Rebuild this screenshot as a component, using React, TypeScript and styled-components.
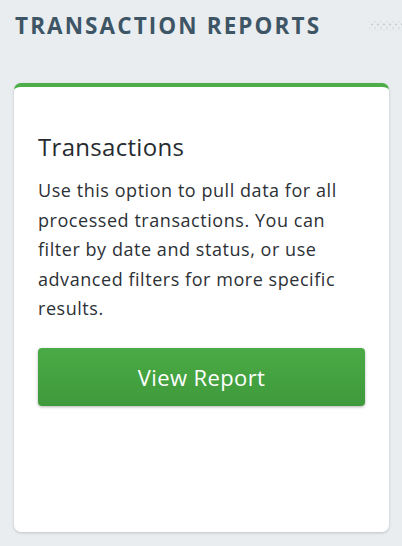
import { ReactElement } from 'react';
import styled, { createGlobalStyle } from 'styled-components';

const GlobalStyle = createGlobalStyle`
  html, body {
    margin: 0;
    padding: 0;
    background: #e9edef;
    font-family: "Open Sans", Lato, sans-serif;
  }
`;

const Page = styled.div`
  width: 402px;
  height: 546px;
  box-sizing: border-box;
  padding: 5px 13px 0 14px;
  overflow: hidden;
`;

const Header = styled.div`
  display: flex;
  align-items: center;
  height: 40px;
  margin-right: -13px;
`;

const Title = styled.h2`
  margin: 0 0 0 1px;
  font-size: 22.5px;
  font-weight: 700;
  letter-spacing: 2.1px;
  color: #3e5566;
  white-space: nowrap;
`;

const Dots = styled.div`
  flex: 1;
  height: 10px;
  margin-left: 48px;
  margin-top: 2px;
  background-image:
    radial-gradient(circle, #c5ccd0 0.9px, transparent 1.2px),
    radial-gradient(circle, #d3d8db 0.9px, transparent 1.2px);
  background-size: 6px 7px, 6px 7px;
  background-position: 0 0, 3px 3.5px;
`;

const Card = styled.section`
  margin-top: 38px;
  height: 449px;
  box-sizing: border-box;
  background: #ffffff;
  border-top: 4px solid #4cae48;
  border-radius: 7px;
  box-shadow: 0 1px 3px rgba(0, 0, 0, 0.18);
  padding: 44px 24px 0 24px;
`;

const CardTitle = styled.h3`
  margin: 0;
  font-size: 24px;
  font-weight: 400;
  letter-spacing: 0.3px;
  line-height: 32px;
  color: #262b30;
`;

const Text = styled.p`
  margin: 13px 0 0;
  font-size: 18px;
  letter-spacing: 0.55px;
  line-height: 29.5px;
  color: #2c3136;
`;

const Button = styled.button`
  display: flex;
  align-items: center;
  justify-content: center;
  width: 100%;
  height: 58px;
  margin-top: 24px;
  border: none;
  border-radius: 4px;
  background: linear-gradient(#4aaa45, #3f9a3b);
  box-shadow: 0 1px 3px rgba(0, 0, 0, 0.3);
  color: #ffffff;
  font-family: inherit;
  font-size: 22px;
  letter-spacing: 0.4px;
  cursor: pointer;
`;

const App = (): ReactElement => (
  <Page>
    <GlobalStyle />
    <Header>
      <Title>TRANSACTION REPORTS</Title>
      <Dots />
    </Header>
    <Card>
      <CardTitle>Transactions</CardTitle>
      <Text>
        Use this option to pull data for all processed transactions. You can
        filter by date and status, or use advanced filters for more specific
        results.
      </Text>
      <Button type="button">View Report</Button>
    </Card>
  </Page>
);

export default App;
